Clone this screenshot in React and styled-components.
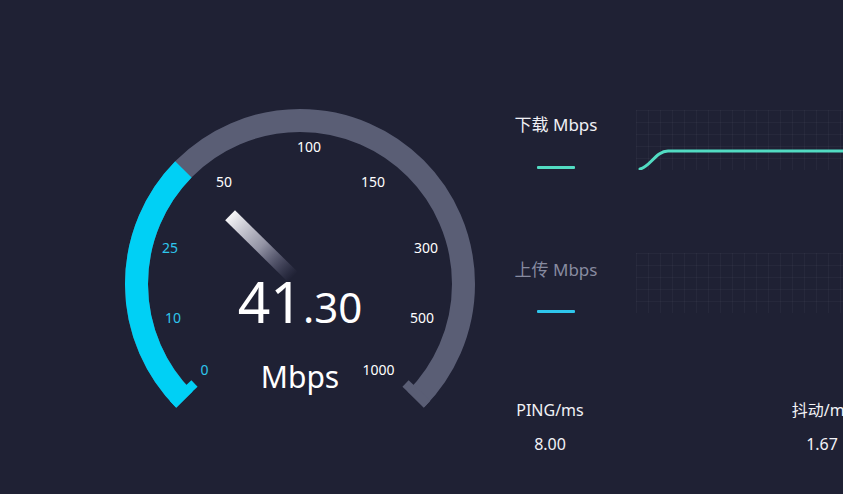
import React from "react";
import styled, { createGlobalStyle } from "styled-components";

const Global = createGlobalStyle`
  html, body { margin: 0; padding: 0; background: #1f2134; overflow: hidden; }
  body { font-family: "Noto Sans", "Noto Sans CJK SC", sans-serif; color: #fff; }
`;

const Page = styled.div`
  display: flex;
  width: 843px;
  height: 494px;
  background: #1f2134;
  overflow: hidden;
`;

const GaugePanel = styled.div`
  position: relative;
  flex: 0 0 500px;
  box-sizing: border-box;
  padding: 105px 0 0 120px;
`;

const Readout = styled.div`
  position: absolute;
  left: 200px;
  top: 271px;
  width: 200px;
  display: flex;
  flex-direction: column;
  align-items: center;
  color: #fff;
`;

const NumberLine = styled.div`
  font-size: 57px;
  line-height: 60px;
  white-space: nowrap;
`;

const Fraction = styled.span`
  font-size: 42px;
`;

const Unit = styled.div`
  margin-top: 22px;
  font-size: 30px;
  line-height: 35px;
`;

const SidePanel = styled.div`
  flex: 0 0 auto;
  width: 560px;
  padding-top: 110px;
  display: flex;
  flex-direction: column;
`;

const SeriesRow = styled.div`
  display: flex;
  align-items: flex-start;
  height: 60px;
  margin-bottom: ${(p) => p.$gap}px;
`;

const Legend = styled.div`
  width: 112px;
  display: flex;
  flex-direction: column;
  align-items: center;
  padding-top: ${(p) => p.$top}px;
`;

const LegendLabel = styled.div`
  font-size: 17px;
  line-height: 20px;
  color: ${(p) => p.$color};
  white-space: nowrap;
`;

const LegendLine = styled.div`
  margin-top: ${(p) => p.$gap}px;
  width: 38px;
  height: 3px;
  border-radius: 1px;
  background: ${(p) => p.$color};
`;

const ChartBox = styled.div`
  margin-left: 24px;
  width: 300px;
  height: 60px;
`;

const Stats = styled.div`
  display: grid;
  grid-template-columns: 100px 100px;
  column-gap: 172px;
`;

const Stat = styled.div`
  display: flex;
  flex-direction: column;
  align-items: center;
  font-size: 16px;
  line-height: 20px;
  color: #f2f2f6;
  white-space: nowrap;
`;

const StatValue = styled.div`
  margin-top: 14px;
`;

const CX = 180;
const CY = 179;
const R = 163.5;
const SW = 23;
const GREY = "#5a5e75";
const CYAN = "#00d0f5";

function pt(angleDeg, r) {
  const a = (angleDeg * Math.PI) / 180;
  return [CX + r * Math.cos(a), CY - r * Math.sin(a)];
}

function arcPath(from, to, r) {
  const [x1, y1] = pt(from, r);
  const [x2, y2] = pt(to, r);
  const large = from - to > 180 ? 1 : 0;
  return `M${x1} ${y1} A${r} ${r} 0 ${large} 1 ${x2} ${y2}`;
}

function tick(angle, color) {
  const [x1, y1] = pt(angle, R + SW / 2);
  const [x2, y2] = pt(angle, R - SW / 2 - 7);
  return <line x1={x1} y1={y1} x2={x2} y2={y2} stroke={color} strokeWidth="9" />;
}

const labels = [
  { t: "0", x: 204.5, y: 369, on: true },
  { t: "10", x: 173, y: 317, on: true },
  { t: "25", x: 170, y: 247, on: true },
  { t: "50", x: 224, y: 181 },
  { t: "100", x: 309, y: 146 },
  { t: "150", x: 373, y: 181 },
  { t: "300", x: 426, y: 247 },
  { t: "500", x: 422, y: 317 },
  { t: "1000", x: 378.5, y: 369 },
];

const valueAngle = 135.5;

function Gauge() {
  return (
    <svg width="360" height="320" viewBox="0 0 360 320">
      <defs>
        <linearGradient id="needleGrad" x1="0" y1="0" x2="0" y2="1">
          <stop offset="0" stopColor="#f6f6f8" stopOpacity="1" />
          <stop offset="0.5" stopColor="#c4c4d4" stopOpacity="0.7" />
          <stop offset="1" stopColor="#8a8ab0" stopOpacity="0" />
        </linearGradient>
      </defs>
      <path d={arcPath(225, -45, R)} stroke={GREY} strokeWidth={SW} fill="none" />
      <path d={arcPath(225, valueAngle, R)} stroke={CYAN} strokeWidth={SW} fill="none" />
      {tick(223.3, CYAN)}
      {tick(-43.3, GREY)}
      {labels.map((l) => (
        <text
          key={l.t}
          x={l.x - 120}
          y={l.y - 105}
          textAnchor="middle"
          dominantBaseline="central"
          fontSize="14"
          fontFamily='"Noto Sans", sans-serif'
          fill={l.on ? "#2ec6ec" : "#ffffff"}
        >
          {l.t}
        </text>
      ))}
      <g transform={`translate(${CX} ${CY}) rotate(${-(valueAngle - 90)})`}>
        <rect x="-7" y="-98" width="14" height="88" fill="url(#needleGrad)" />
      </g>
    </svg>
  );
}

function Chart({ line }) {
  const v = [];
  for (let x = 0; x <= 300; x += 12) v.push(x);
  const h = [0, 12, 24, 36, 48, 60];
  return (
    <svg width="300" height="60" viewBox="0 0 300 60">
      {v.map((x) => (
        <line key={"v" + x} x1={x + 0.5} y1="0" x2={x + 0.5} y2="60" stroke="rgba(255,255,255,0.035)" strokeWidth="1" />
      ))}
      {h.map((y) => (
        <line key={"h" + y} x1="0" y1={y + 0.5} x2="300" y2={y + 0.5} stroke="rgba(255,255,255,0.035)" strokeWidth="1" />
      ))}
      {line && (
        <path
          d="M4 59 C 14 57, 20 41, 32 41 L 300 41"
          stroke="#52dcc3"
          strokeWidth="3"
          fill="none"
          strokeLinecap="round"
        />
      )}
    </svg>
  );
}

export default function App() {
  return (
    <Page>
      <Global />
      <GaugePanel>
        <Gauge />
        <Readout>
          <NumberLine>
            41<Fraction>.30</Fraction>
          </NumberLine>
          <Unit>Mbps</Unit>
        </Readout>
      </GaugePanel>
      <SidePanel>
        <SeriesRow $gap={83}>
          <Legend $top={5}>
            <LegendLabel $color="#f0f0f5">下载 Mbps</LegendLabel>
            <LegendLine $gap={31} $color="#52dcc3" />
          </Legend>
          <ChartBox>
            <Chart line />
          </ChartBox>
        </SeriesRow>
        <SeriesRow $gap={87}>
          <Legend $top={7}>
            <LegendLabel $color="#878ba0">上传 Mbps</LegendLabel>
            <LegendLine $gap={30} $color="#2ec6ec" />
          </Legend>
          <ChartBox>
            <Chart />
          </ChartBox>
        </SeriesRow>
        <Stats>
          <Stat>
            <div>PING/ms</div>
            <StatValue>8.00</StatValue>
          </Stat>
          <Stat>
            <div>抖动/ms</div>
            <StatValue>1.67</StatValue>
          </Stat>
        </Stats>
      </SidePanel>
    </Page>
  );
}
